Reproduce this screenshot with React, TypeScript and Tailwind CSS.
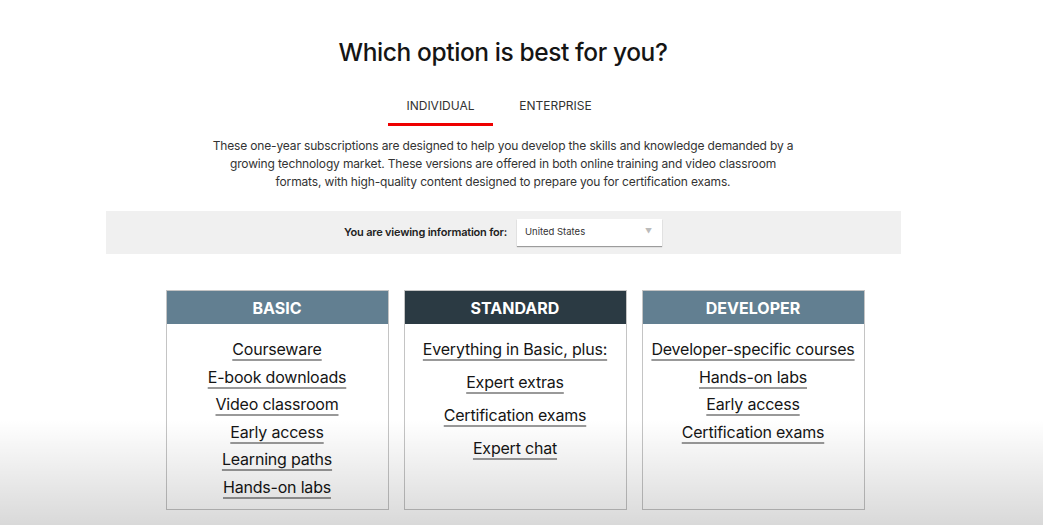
const plans = [
  {
    name: 'BASIC',
    head: 'bg-[#627f91]',
    gap: 'gap-[7.6px]',
    items: ['Courseware', 'E-book downloads', 'Video classroom', 'Early access', 'Learning paths', 'Hands-on labs'],
  },
  {
    name: 'STANDARD',
    head: 'bg-[#2b3a43]',
    gap: 'gap-[13px]',
    items: ['Everything in Basic, plus:', 'Expert extras', 'Certification exams', 'Expert chat'],
  },
  {
    name: 'DEVELOPER',
    head: 'bg-[#627f91]',
    gap: 'gap-[7.6px]',
    items: ['Developer-specific courses', 'Hands-on labs', 'Early access', 'Certification exams'],
  },
];

export default function App() {
  return (
    <main className="relative h-[525px] w-[1043px] overflow-hidden bg-white font-['Inter',sans-serif] text-[#151515]">
      <div className="flex w-[1006px] flex-col items-center pt-[36px]">
        {/* Heading */}
        <h1 className="text-[24.5px] font-medium leading-[32px] tracking-[-0.4px]">Which option is best for you?</h1>

        {/* Tabs */}
        <div className="mt-[30px] flex text-[12px] leading-[16px] text-[#333]">
          <div className="w-[105px] border-b-[3px] border-[#e00] pb-[9px] text-center">INDIVIDUAL</div>
          <div className="w-[125px] pb-[9px] text-center">ENTERPRISE</div>
        </div>

        {/* Intro */}
        <p className="mt-[11px] text-center text-[12px] leading-[18px] tracking-[-0.15px] text-[#333]">
          These one-year subscriptions are designed to help you develop the skills and knowledge demanded by a
          <br />
          growing technology market. These versions are offered in both online training and video classroom
          <br />
          formats, with high-quality content designed to prepare you for certification exams.
        </p>

        {/* Region selector */}
        <div className="mt-[20px] flex h-[43px] w-[795px] items-center justify-center gap-[10px] bg-[#f0f0f0]">
          <span className="text-[11px] font-semibold tracking-[-0.2px] text-[#222]">You are viewing information for:</span>
          <div className="flex h-[27px] w-[145px] items-center justify-between bg-white pl-[8px] pr-[10px] shadow-[0_1px_1px_rgba(0,0,0,0.35)]">
            <span className="text-[9.5px] text-[#333]">United States</span>
            <span className="text-[7px] text-[#bbb]">▼</span>
          </div>
        </div>

        {/* Plans */}
        <div className="mt-[36px] flex gap-[15px] pl-[24px]">
          {plans.map((p) => (
            <div key={p.name} className="flex h-[220px] w-[223px] flex-col border border-[#c4c4c4] bg-white">
              <div className={`${p.head} flex h-[33px] items-center justify-center text-[16px] font-bold text-white`}>
                {p.name}
              </div>
              <ul className={`flex flex-col items-center pt-[15px] ${p.gap}`}>
                {p.items.map((it) => (
                  <li
                    key={it}
                    className="text-[16px] leading-[20px] tracking-[-0.2px] underline decoration-[#999] decoration-2 underline-offset-[4px]"
                  >
                    {it}
                  </li>
                ))}
              </ul>
            </div>
          ))}
        </div>
      </div>

      {/* Video frame shading */}
      <div className="pointer-events-none absolute inset-x-0 bottom-0 h-[105px] bg-gradient-to-b from-transparent to-black/15" />
    </main>
  );
}
